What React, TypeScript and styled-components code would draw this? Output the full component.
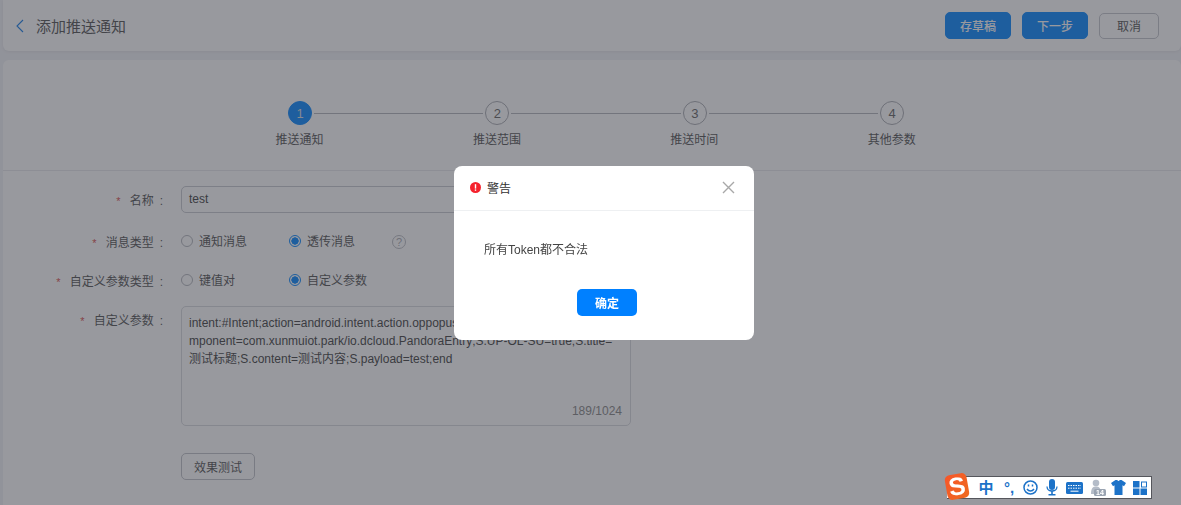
import styled, { createGlobalStyle } from 'styled-components';

const GlobalStyle = createGlobalStyle`
	html, body {
		margin: 0;
		padding: 0;
		height: 100%;
		overflow: hidden;
	}
	body {
		background: #f1f2f6;
		color: #333;
		font-family: "Liberation Sans", "Noto Sans CJK SC", sans-serif;
		font-size: 12px;
	}
`;

const Page = styled.div`
	height: 505px;
	padding: 0 0 0 3px;
	display: flex;
	flex-direction: column;
	gap: 9px;
	overflow: hidden;
`;

const TopBar = styled.header`
	flex: none;
	height: 51px;
	padding: 0 22px 0 11px;
	background: #fff;
	border-radius: 0 0 6px 6px;
	box-shadow: 0 1px 3px rgba(0, 0, 0, 0.06);
	display: flex;
	align-items: center;
`;

const BackIcon = styled.svg`
	width: 12px;
	height: 16px;
	margin: 1px 10px 0 0;
	fill: none;
	stroke: #1a7fe8;
	stroke-width: 1.1;
`;

const PageTitle = styled.h1`
	flex: 1;
	margin: 0;
	font-size: 15px;
	font-weight: 400;
	color: #555;
`;

const ActionButton = styled.button<{ $primary?: boolean }>`
	height: ${(p) => (p.$primary ? '27px' : '26px')};
	width: ${(p) => (p.$primary ? '66px' : '60px')};
	margin-left: 11px;
	padding: 0;
	border: 1px solid ${(p) => (p.$primary ? '#0a88ff' : '#c4c6cc')};
	border-radius: 5px;
	background: ${(p) => (p.$primary ? '#0a88ff' : '#fff')};
	color: ${(p) => (p.$primary ? '#fff' : '#555')};
	font: inherit;
	font-size: 12px;
	font-weight: ${(p) => (p.$primary ? 500 : 400)};
`;

const MainCard = styled.main`
	flex: 1;
	background: #fff;
	border-radius: 6px 6px 0 0;
`;

const Stepper = styled.ol`
	list-style: none;
	margin: 0;
	padding: 41px 0 0 237px;
	height: 111px;
	box-sizing: border-box;
	display: flex;
	border-bottom: 1px solid #e8e9ed;
`;

const Step = styled.li`
	width: 197.4px;
	flex: none;
	display: flex;
	flex-direction: column;
	align-items: flex-start;
`;

const StepTop = styled.div`
	width: calc(100% + 46px);
	display: flex;
	align-items: center;
	padding-left: 48px;
	box-sizing: border-box;
	gap: 2px;
`;

const StepCircle = styled.span<{ $active?: boolean }>`
	flex: none;
	width: 24px;
	height: 24px;
	box-sizing: border-box;
	border-radius: 50%;
	border: 1px solid ${(p) => (p.$active ? '#0a88ff' : '#aaacb2')};
	background: ${(p) => (p.$active ? '#0a88ff' : '#fff')};
	color: ${(p) => (p.$active ? '#d8dce4' : '#666')};
	font-size: 13px;
	display: flex;
	align-items: center;
	justify-content: center;
`;

const StepLine = styled.span`
	flex: 1;
	height: 1px;
	background: #b4b6bc;
`;

const StepLabel = styled.span`
	width: 119px;
	margin-top: 5px;
	text-align: center;
	font-size: 12px;
	color: #555;
`;

const Form = styled.form`
	padding: 15px 0 0;
	display: flex;
	flex-direction: column;
`;

const Row = styled.div<{ $height: number }>`
	display: grid;
	grid-template-columns: 160px 450px;
	column-gap: 18px;
	min-height: ${(p) => p.$height}px;
	align-items: start;
`;

const Label = styled.label`
	text-align: right;
	font-size: 12px;
	line-height: 31px;
	color: #555;
	white-space: nowrap;
`;

const Star = styled.span`
	color: #d9534f;
	margin-right: 9px;
	font-size: 11px;
`;

const Colon = styled.span`
	margin-left: 6px;
`;

const TextInput = styled.div`
	height: 27px;
	box-sizing: border-box;
	padding: 0 7px;
	border: 1px solid #c8cad0;
	border-radius: 5px;
	line-height: 24px;
	font-size: 12px;
	color: #444;
`;

const RadioGroup = styled.div`
	display: flex;
	align-items: center;
	height: 24px;
`;

const RadioItem = styled.span`
	display: flex;
	align-items: center;
	gap: 6px;
	color: #555;
	font-size: 12px;
	&:first-child {
		width: 108px;
	}
`;

const RadioDot = styled.i<{ $on?: boolean }>`
	width: 12px;
	height: 12px;
	margin-top: 1px;
	box-sizing: border-box;
	border-radius: 50%;
	border: 1px solid ${(p) => (p.$on ? '#0a88ff' : '#b4b6bc')};
	background: ${(p) => (p.$on ? 'radial-gradient(circle, #0a88ff 3.4px, #fff 3.9px)' : '#fff')};
`;

const HelpMark = styled.span`
	width: 14px;
	height: 14px;
	margin: 3px 0 0 37px;
	box-sizing: border-box;
	border: 1px solid #bbbdc3;
	border-radius: 50%;
	color: #aaacb2;
	font-size: 11px;
	line-height: 12px;
	text-align: center;
`;

const TextArea = styled.div`
	height: 120px;
	box-sizing: border-box;
	padding: 7px 7px 0;
	border: 1px solid #d8dade;
	border-radius: 5px;
	position: relative;
	font-size: 12px;
	line-height: 18px;
	color: #444;
	white-space: nowrap;
`;

const Counter = styled.span`
	position: absolute;
	right: 8px;
	bottom: 5px;
	color: #888;
`;

const TestButton = styled.button`
	width: 74px;
	height: 27px;
	padding: 0;
	border: 1px solid #c0c2c8;
	border-radius: 5px;
	background: #fff;
	color: #555;
	font: inherit;
`;

const Overlay = styled.div`
	position: fixed;
	inset: 0;
	background: rgba(50, 52, 62, 0.5);
`;

const Modal = styled.div`
	position: fixed;
	left: 454px;
	top: 166px;
	width: 300px;
	height: 174px;
	background: #fff;
	border-radius: 8px;
	display: flex;
	flex-direction: column;
`;

const ModalHead = styled.div`
	height: 45px;
	box-sizing: border-box;
	padding: 0 19px 1px 16px;
	border-bottom: 1px solid #eef0f2;
	display: flex;
	align-items: center;
	gap: 6px;
	font-size: 12px;
	color: #333;
`;

const ModalTitle = styled.span`
	flex: 1;
`;

const ModalBody = styled.div`
	padding: 31px 30px 0;
	height: 78px;
	box-sizing: border-box;
	font-size: 12px;
	line-height: 16px;
	color: #444;
`;

const ModalFoot = styled.div`
	display: flex;
	justify-content: center;
	padding-left: 6px;
`;

const ConfirmButton = styled.button`
	width: 60px;
	height: 27px;
	padding: 0;
	border: none;
	border-radius: 5px;
	background: #0080ff;
	color: #fff;
	font: inherit;
	font-weight: 700;
`;

const ImeBar = styled.div`
	position: fixed;
	left: 947px;
	top: 476px;
	width: 205px;
	height: 23px;
	box-sizing: border-box;
	padding-left: 31px;
	background: #fff;
	border: 1px solid #55565c;
	border-left: none;
	display: flex;
	align-items: center;
	color: #1c72c8;
`;

const ImeLogo = styled.span`
	position: absolute;
	left: -1px;
	top: -3px;
	width: 22px;
	height: 25px;
	border-radius: 5px;
	background: linear-gradient(135deg, #f7562a, #ee6a1e);
	transform: rotate(-10deg);
	color: #fff;
	font-weight: 700;
	font-size: 25px;
	line-height: 25px;
	text-align: center;
`;

const ImeText = styled.span<{ $w: number; $gap?: number }>`
	width: ${(p) => p.$w}px;
	margin-left: ${(p) => p.$gap ?? 0}px;
	font-size: 15px;
	font-weight: 700;
	text-align: center;
	line-height: 20px;
`;

const ImeIcon = styled.svg<{ $gap: number }>`
	flex: none;
	margin-left: ${(p) => p.$gap}px;
`;

const steps = ['推送通知', '推送范围', '推送时间', '其他参数'];

function App() {
	return (
		<>
			<GlobalStyle />
			<Page>
				<TopBar>
					<BackIcon viewBox="0 0 12 16">
						<path d="M9 2 3 8l6 6" />
					</BackIcon>
					<PageTitle>添加推送通知</PageTitle>
					<ActionButton $primary>存草稿</ActionButton>
					<ActionButton $primary>下一步</ActionButton>
					<ActionButton>取消</ActionButton>
				</TopBar>
				<MainCard>
					<Stepper>
						{steps.map((label, i) => (
							<Step key={label}>
								<StepTop>
									<StepCircle $active={i === 0}>{i + 1}</StepCircle>
									{i < 3 && <StepLine />}
								</StepTop>
								<StepLabel>{label}</StepLabel>
							</Step>
						))}
					</Stepper>
					<Form>
						<Row $height={42}>
							<Label><Star>*</Star>名称<Colon>:</Colon></Label>
							<TextInput>test</TextInput>
						</Row>
						<Row $height={39}>
							<Label><Star>*</Star>消息类型<Colon>:</Colon></Label>
							<RadioGroup>
								<RadioItem><RadioDot />通知消息</RadioItem>
								<RadioItem><RadioDot $on />透传消息</RadioItem>
								<HelpMark>?</HelpMark>
							</RadioGroup>
						</Row>
						<Row $height={39}>
							<Label><Star>*</Star>自定义参数类型<Colon>:</Colon></Label>
							<RadioGroup>
								<RadioItem><RadioDot />键值对</RadioItem>
								<RadioItem><RadioDot $on />自定义参数</RadioItem>
							</RadioGroup>
						</Row>
						<Row $height={147}>
							<Label><Star>*</Star>自定义参数<Colon>:</Colon></Label>
							<TextArea>
								intent:#Intent;action=android.intent.action.oppopush;launchFlags=0x10000000;co
								<br />
								mponent=com.xunmuiot.park/io.dcloud.PandoraEntry;S.UP-OL-SU=true;S.title=
								<br />
								测试标题;S.content=测试内容;S.payload=test;end
								<Counter>189/1024</Counter>
							</TextArea>
						</Row>
						<Row $height={27}>
							<span />
							<div><TestButton type="button">效果测试</TestButton></div>
						</Row>
					</Form>
				</MainCard>
			</Page>
			<Overlay />
			<Modal>
				<ModalHead>
					<svg width="11" height="11" viewBox="0 0 11 11">
						<circle cx="5.5" cy="5.5" r="5.5" fill="#f5222d" />
						<rect x="4.8" y="2.2" width="1.4" height="4.4" fill="#fff" />
						<rect x="4.8" y="7.4" width="1.4" height="1.4" fill="#fff" />
					</svg>
					<ModalTitle>警告</ModalTitle>
					<svg width="13" height="13" viewBox="0 0 13 13" fill="none" stroke="#a8a8a8" strokeWidth="1.4">
						<path d="M1 1l11 11M12 1 1 12" />
					</svg>
				</ModalHead>
				<ModalBody>所有Token都不合法</ModalBody>
				<ModalFoot>
					<ConfirmButton type="button">确定</ConfirmButton>
				</ModalFoot>
			</Modal>
			<ImeBar>
				<ImeLogo>S</ImeLogo>
				<ImeText $w={16}>中</ImeText>
				<ImeText $w={18} $gap={6}>°,</ImeText>
				<ImeIcon $gap={5} width="15" height="15" viewBox="0 0 15 15" fill="none" stroke="#1c72c8" strokeWidth="1.5">
					<circle cx="7.5" cy="7.5" r="6.5" />
					<path d="M4 9c1.8 2.600 5.200 2.600 7 0" />
					<path d="M5.500 4.500v2M9.500 4.500v2" />
				</ImeIcon>
				<ImeIcon $gap={8} width="12" height="17" viewBox="0 0 12 17" fill="#1c72c8">
					<rect x="3" y="0" width="6" height="11" rx="3" />
					<path d="M1 7.500c0 6 10 6 10 0" fill="none" stroke="#1c72c8" strokeWidth="1.300" />
					<rect x="5.200" y="12" width="1.600" height="3" />
					<rect x="2.500" y="15" width="7" height="1.500" />
				</ImeIcon>
				<ImeIcon $gap={8} width="17" height="12" viewBox="0 0 17 12">
					<rect width="17" height="12" rx="1.500" fill="#1c72c8" />
					<path d="M2 3.500h13M2 6.200h13" stroke="#fff" strokeDasharray="1.500 1" />
					<path d="M4.500 9.200h8" stroke="#fff" />
				</ImeIcon>
				<ImeIcon $gap={7} width="16" height="17" viewBox="0 0 16 17" fill="#b4bcc8">
					<circle cx="6" cy="4" r="3.300" />
					<path d="M1 15c0-6 2-7.500 5-7.500s5 1.500 5 7.500z" />
					<rect x="4" y="10" width="12" height="7" rx="1.500" fill="#9aa4b2" />
					<text x="10" y="16" textAnchor="middle" fontSize="7" fontWeight="700" fill="#fff">14</text>
				</ImeIcon>
				<ImeIcon $gap={5} width="15" height="15" viewBox="0 0 15 15" fill="#1c72c8">
					<path d="M4.500 0h1.800c.4 1.300 2 1.300 2.400 0h1.800L15 3l-2 3.200-1.500-1V15h-8V5.200L2 6.200 0 3z" />
				</ImeIcon>
				<ImeIcon $gap={7} width="14" height="14" viewBox="0 0 14 14" fill="#1c72c8">
					<rect width="6.500" height="6.500" />
					<rect x="8.500" y="1" width="5" height="5" fill="none" stroke="#1c72c8" />
					<rect y="7.500" width="6.500" height="6.500" />
					<rect x="7.500" y="7.500" width="6.500" height="6.500" />
				</ImeIcon>
			</ImeBar>
		</>
	);
}

export default App;
